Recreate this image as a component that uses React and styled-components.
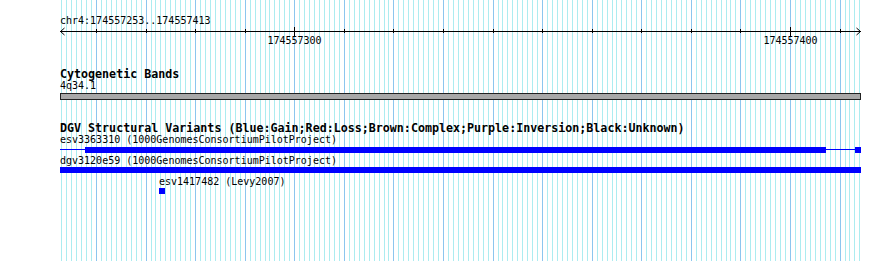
import styled, { createGlobalStyle } from 'styled-components';

const GlobalStyle = createGlobalStyle`
  html, body {
    margin: 0;
    padding: 0;
    background: #ffffff;
  }
`;

const TRACK_LEFT = 60;
const TRACK_WIDTH = 801;
// pixel of base 174557260 and pixels per base, read from the ruler
const TICK0 = 96;
const PX_PER_BP = 4.957;

const bpToX = (bp) => TICK0 + (bp - 174557260) * PX_PER_BP;

const variants = [
  {
    id: 'esv3363310',
    source: '1000GenomesConsortiumPilotProject',
    parts: [
      { from: 60, to: 85, thin: true },
      { from: 85, to: 826 },
      { from: 826, to: 855, thin: true },
      { from: 855, to: 861 },
    ],
  },
  {
    id: 'dgv3120e59',
    source: '1000GenomesConsortiumPilotProject',
    parts: [{ from: 60, to: 861 }],
  },
  {
    id: 'esv1417482',
    source: 'Levy2007',
    parts: [{ from: 159, to: 165 }],
  },
];

const Page = styled.div`
  position: relative;
  width: 890px;
  height: 261px;
  overflow: hidden;
  background: #ffffff;
`;

const GridLayer = styled.svg`
  position: absolute;
  left: 0;
  top: 0;
  width: 890px;
  height: 261px;
  z-index: 0;
`;

const Tracks = styled.div`
  position: relative;
  z-index: 1;
  display: flex;
  flex-direction: column;
  padding-left: ${TRACK_LEFT}px;
  width: ${TRACK_WIDTH}px;
`;

const RulerLabel = styled.div`
  margin-top: 16px;
  font-family: 'DejaVu Sans Mono', 'Liberation Mono', monospace;
  font-size: 10px;
  line-height: 10px;
  color: #000;
  white-space: nowrap;
`;

const RulerSvg = styled.svg`
  display: block;
  width: ${TRACK_WIDTH}px;
  height: 22px;
  overflow: visible;
`;

const TrackTitle = styled.div`
  margin-top: ${(p) => p.$gap}px;
  font-family: 'DejaVu Sans Mono', 'Liberation Mono', monospace;
  font-weight: bold;
  font-size: 11.67px;
  line-height: 12px;
  color: #000;
  white-space: nowrap;
`;

const FeatureLabel = styled.div`
  margin-top: ${(p) => p.$gap}px;
  padding-left: ${(p) => p.$indent}px;
  font-family: 'DejaVu Sans Mono', 'Liberation Mono', monospace;
  font-size: 10px;
  line-height: 11px;
  color: #000;
  white-space: nowrap;
`;

const BandBar = styled.div`
  margin-top: 2px;
  height: 5px;
  border: 1px solid #222;
  background: #a8a8a8;
`;

const FeatureRow = styled.div`
  position: relative;
  margin-top: ${(p) => p.$gap}px;
  height: 6px;
`;

const Segment = styled.div`
  position: absolute;
  top: ${(p) => (p.$thin ? 2 : 0)}px;
  height: ${(p) => (p.$thin ? 1 : 6)}px;
  background: #0000ff;
`;

function Grid() {
  const lines = [];
  for (let k = -7; k <= 154; k++) {
    const x = Math.round(TICK0 + k * PX_PER_BP);
    if (x < TRACK_LEFT || x > TRACK_LEFT + TRACK_WIDTH - 1) continue;
    const major = ((k % 10) + 10) % 10 === 0;
    lines.push(
      <rect
        key={k}
        x={x}
        y={0}
        width={1}
        height={261}
        fill={major ? '#8cc6ee' : '#acecf0'}
      />
    );
  }
  return (
    <GridLayer viewBox="0 0 890 261" shapeRendering="crispEdges">
      {lines}
    </GridLayer>
  );
}

function Ruler() {
  const ticks = [];
  for (let i = 0; i <= 15; i++) {
    const bp = 174557260 + i * 10;
    const x = Math.round(bpToX(bp)) - TRACK_LEFT + 0.5;
    const major = bp % 100 === 0;
    ticks.push(
      <g key={bp}>
        <line
          x1={x}
          x2={x}
          y1={major ? 1 : 3}
          y2={major ? 10 : 7}
          stroke="#000"
          strokeWidth={1}
        />
        {major && (
          <text
            x={x}
            y={18}
            textAnchor="middle"
            fontFamily="'DejaVu Sans Mono', 'Liberation Mono', monospace"
            fontSize="10"
            fill="#000"
          >
            {bp}
          </text>
        )}
      </g>
    );
  }
  const end = TRACK_WIDTH;
  return (
    <RulerSvg viewBox={`0 0 ${TRACK_WIDTH} 22`}>
      <line x1={0} x2={end} y1={5.5} y2={5.5} stroke="#000" strokeWidth={1} shapeRendering="crispEdges" />
      <polyline points="4.5,2 0.5,5.5 4.5,9" fill="none" stroke="#000" strokeWidth={1} />
      <polyline points={`${end - 4.5},2 ${end - 0.5},5.5 ${end - 4.5},9`} fill="none" stroke="#000" strokeWidth={1} />
      {ticks}
    </RulerSvg>
  );
}

const labelGaps = [0, 2, 3];
const rowGaps = [2, 1, 1];

export default function App() {
  return (
    <>
      <GlobalStyle />
      <Page>
        <Grid />
        <Tracks>
          <RulerLabel>chr4:174557253..174557413</RulerLabel>
          <Ruler />

          <TrackTitle $gap={20}>Cytogenetic Bands</TrackTitle>
          <FeatureLabel $gap={0} $indent={0}>4q34.1</FeatureLabel>
          <BandBar />

          <TrackTitle $gap={22}>
            DGV Structural Variants (Blue:Gain;Red:Loss;Brown:Complex;Purple:Inversion;Black:Unknown)
          </TrackTitle>
          {variants.map((v, i) => (
            <div key={v.id}>
              <FeatureLabel $gap={labelGaps[i]} $indent={v.parts[0].from - TRACK_LEFT}>
                {v.id} ({v.source})
              </FeatureLabel>
              <FeatureRow $gap={rowGaps[i]}>
                {v.parts.map((p, j) => (
                  <Segment
                    key={j}
                    $thin={p.thin}
                    style={{ left: p.from - TRACK_LEFT, width: p.to - p.from }}
                  />
                ))}
              </FeatureRow>
            </div>
          ))}
        </Tracks>
      </Page>
    </>
  );
}
